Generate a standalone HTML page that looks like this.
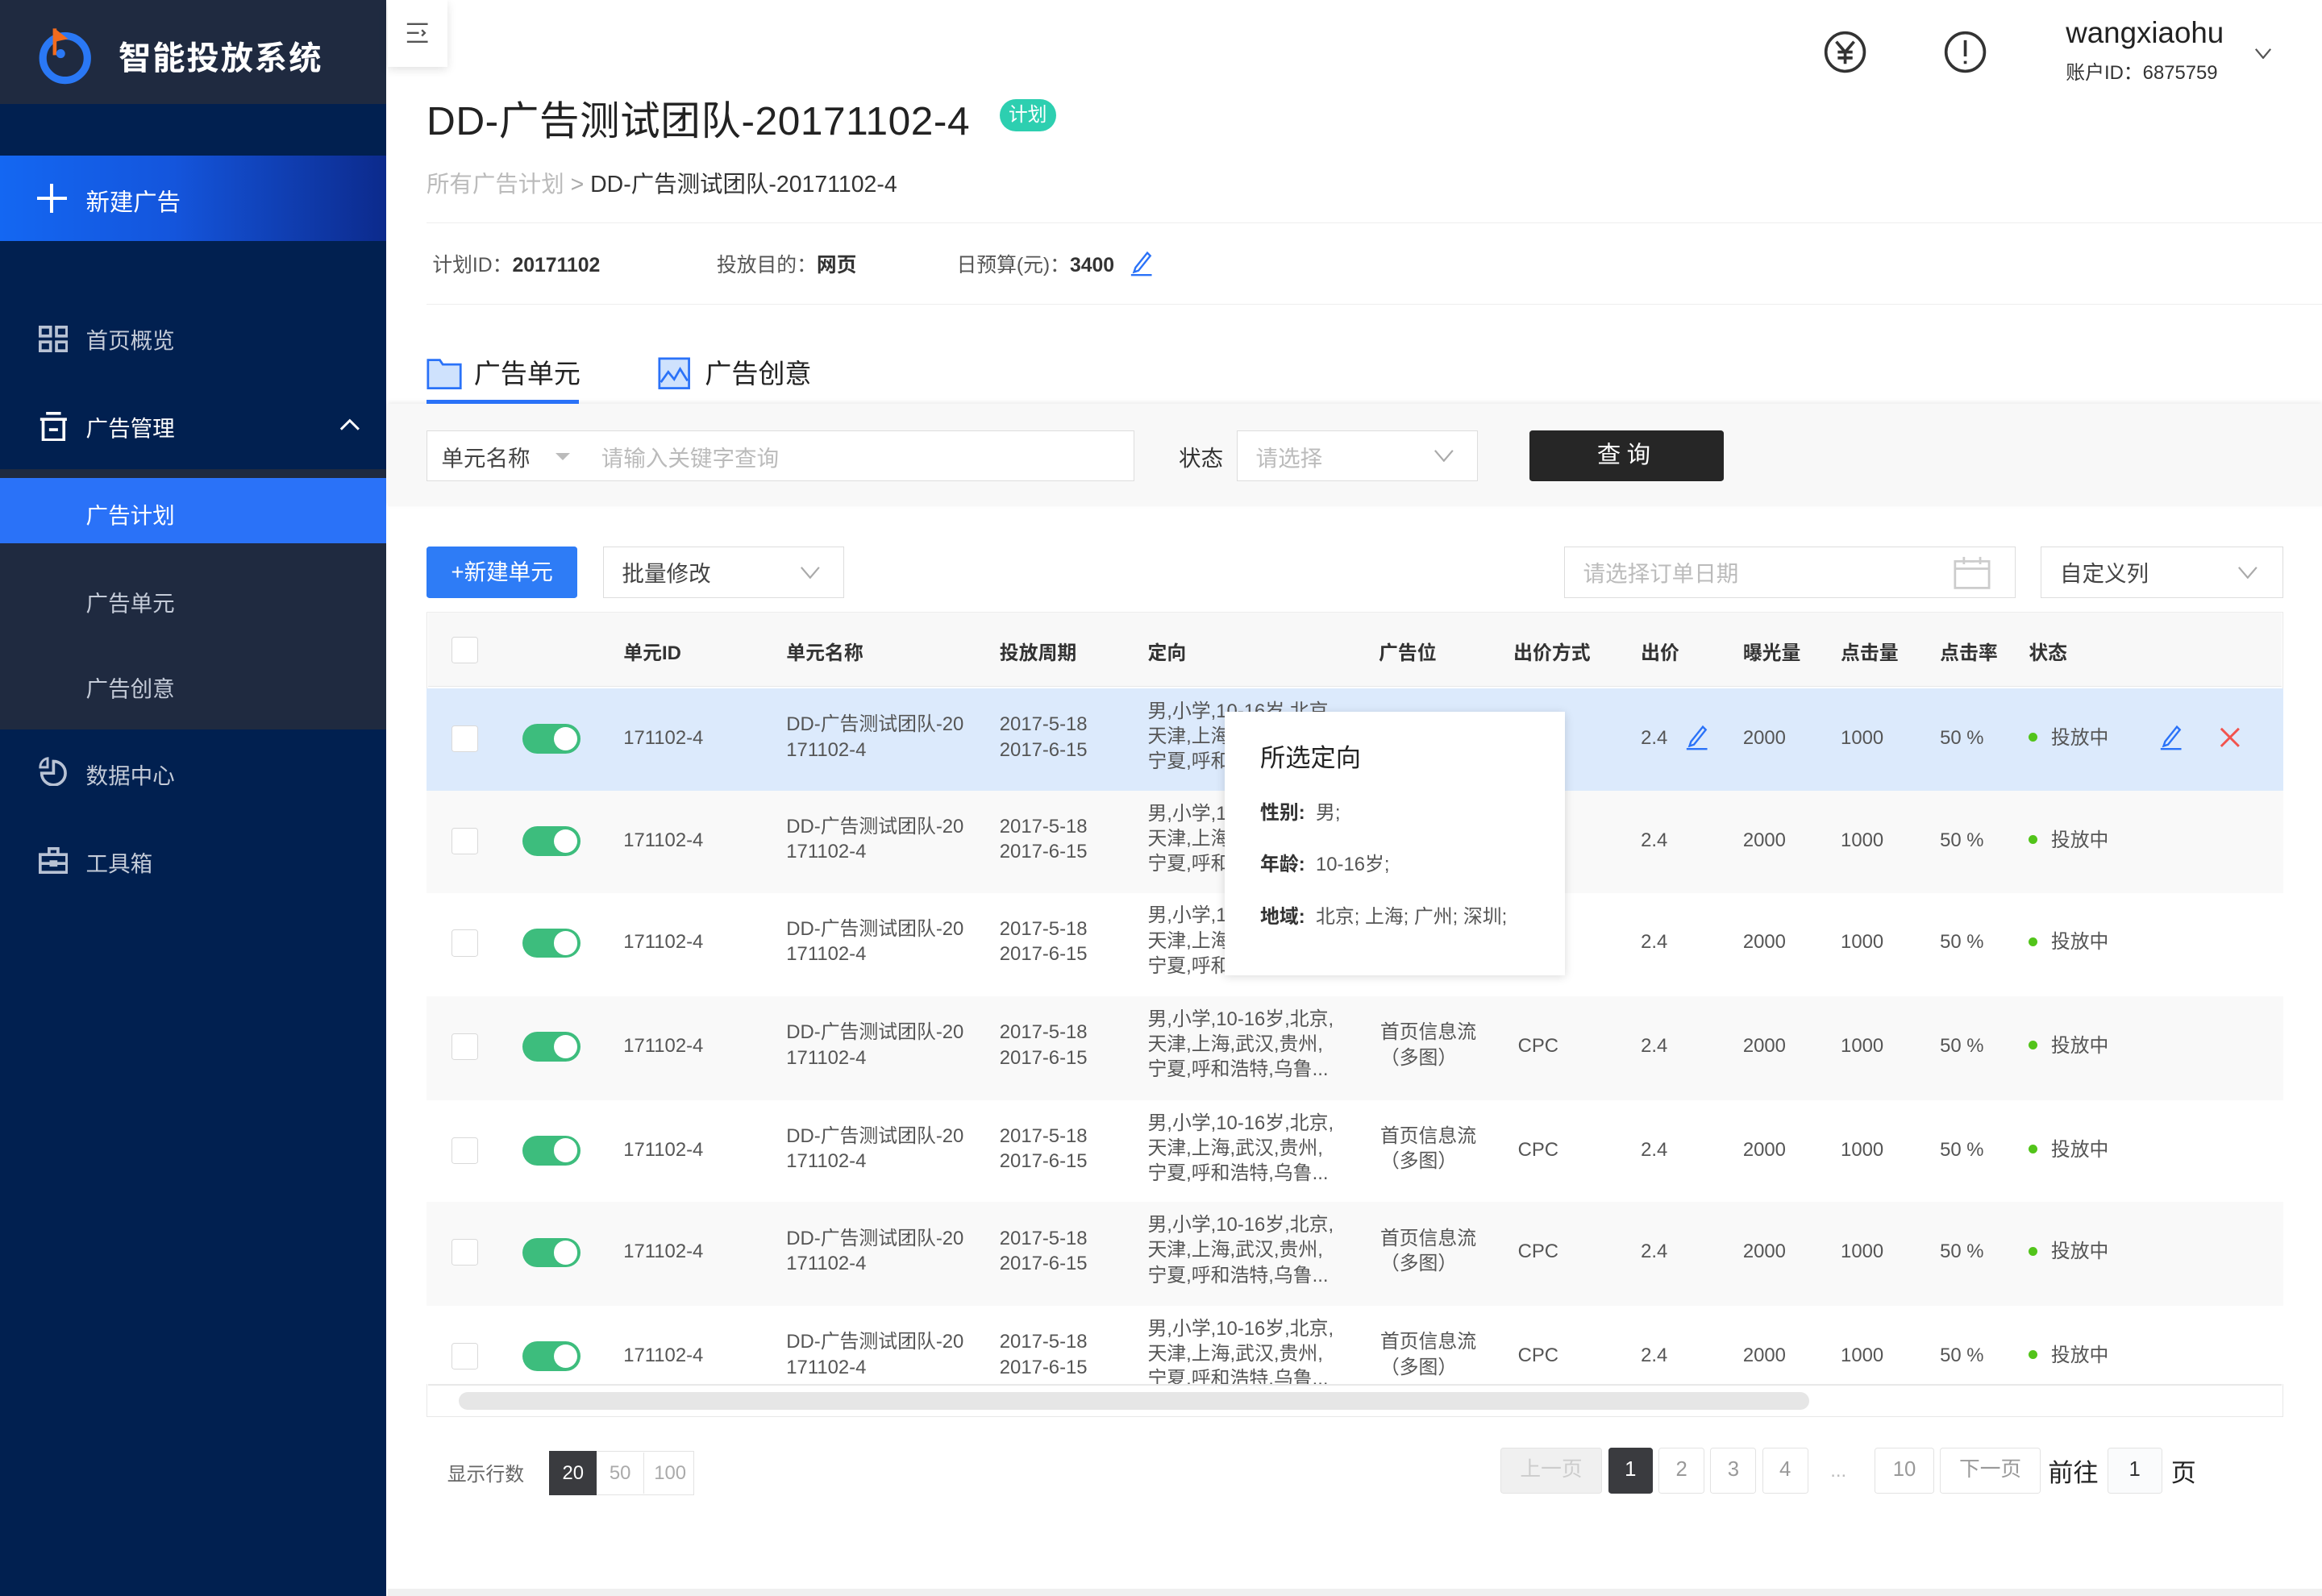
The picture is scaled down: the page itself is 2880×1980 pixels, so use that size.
<!DOCTYPE html>
<html><head><meta charset="utf-8">
<style>
*{box-sizing:border-box;margin:0;padding:0}
html,body{width:2880px;height:1980px;overflow:hidden;background:#fff}
#w{zoom:1.836735;width:1568px;height:1078px;position:relative;font-family:"Liberation Sans","Noto Sans CJK SC",sans-serif;color:#333;font-size:13px}
.a{position:absolute;white-space:nowrap}
.side{position:absolute;left:0;top:0;width:261px;height:1078px;background:#012050}
.nav{color:#c4cbd8;font-size:15px}
.row{position:absolute;left:288px;width:1254px;height:70px}
.row .a{color:#555;font-size:13px;line-height:17px}
.cb{position:absolute;left:17px;width:18px;height:18px;border:1px solid #d9d9d9;border-radius:2px;background:#fff}
.tg{position:absolute;left:65px;width:39px;height:20px;border-radius:10px;background:#3dbd7d}
.tg:after{content:"";position:absolute;right:2px;top:2px;width:16px;height:16px;border-radius:50%;background:#fff}
.dot{display:inline-block;width:6px;height:6px;border-radius:50%;background:#52c41a;margin-right:9px;vertical-align:middle;position:relative;top:-1px}
.th{position:absolute;top:430px;font-weight:bold;font-size:13px;color:#333}
.pg{position:absolute;top:978px;height:31px;border:1px solid #e3e3e3;border-radius:2px;text-align:center;line-height:29px;font-size:14px;color:#999;background:#fff}
</style></head><body><div id="w">

<div class="side"></div>
<div class="a" style="left:0;top:0;width:261px;height:70px;background:#1f2a40"></div>
<svg class="a" style="left:24px;top:15px" width="40" height="42" viewBox="0 0 40 42"><circle cx="20" cy="24" r="15" fill="none" stroke="#2a78f5" stroke-width="5"/><path d="M13 4 L13 22" stroke="#f26b1d" stroke-width="2.5"/><path d="M13 4 L22 11 L13 13Z" fill="#f26b1d"/><circle cx="17" cy="21" r="3" fill="#2a78f5"/></svg>
<div class="a" style="left:80px;top:21px;font-size:22px;font-weight:bold;color:#fff;letter-spacing:1px">智能投放系统</div>
<div class="a" style="left:0;top:105px;width:261px;height:58px;background:linear-gradient(90deg,#1467f2 0%,#1455dc 45%,#0c2a8c 100%)"></div>
<div class="a" style="left:25px;top:124px;width:20px;height:20px"><div class="a" style="left:9px;top:0;width:2px;height:20px;background:#fff"></div><div class="a" style="left:0;top:9px;width:20px;height:2px;background:#fff"></div></div>
<div class="a" style="left:58px;top:124px;font-size:16px;color:#fff">新建广告</div>

<svg class="a" style="left:26px;top:220px" width="20" height="18" viewBox="0 0 20 18" fill="none" stroke="#b8c2d4" stroke-width="2"><rect x="1" y="1" width="7" height="6"/><rect x="12" y="1" width="7" height="6"/><rect x="1" y="11" width="7" height="6"/><rect x="12" y="11" width="7" height="6"/></svg>
<div class="a nav" style="left:58px;top:218px">首页概览</div>
<svg class="a" style="left:26px;top:278px" width="20" height="20" viewBox="0 0 20 20" fill="none" stroke="#fff" stroke-width="2"><path d="M5 1H15M1 5H19M3 5V19H17V5M7 12H13"/></svg>
<div class="a" style="left:58px;top:277px;font-size:15px;color:#fff">广告管理</div>
<svg class="a" style="left:229px;top:282px" width="14" height="10" viewBox="0 0 14 10" fill="none" stroke="#fff" stroke-width="1.6"><path d="M1 8L7 2L13 8"/></svg>
<div class="a" style="left:0;top:317px;width:261px;height:176px;background:#1f2a40"></div>
<div class="a" style="left:0;top:323px;width:261px;height:44px;background:#2a72f8"></div>
<div class="a" style="left:58px;top:336px;font-size:15px;color:#fff">广告计划</div>
<div class="a nav" style="left:58px;top:395px">广告单元</div>
<div class="a nav" style="left:58px;top:453px">广告创意</div>
<svg class="a" style="left:26px;top:511px" width="20" height="20" viewBox="0 0 20 20" fill="none" stroke="#b8c2d4" stroke-width="2"><path d="M10 3A8 8 0 1 1 2 11H10Z"/><path d="M6 1V7H1A6 6 0 0 1 6 1Z" stroke-width="1.6"/></svg>
<div class="a nav" style="left:58px;top:512px">数据中心</div>
<svg class="a" style="left:26px;top:572px" width="20" height="18" viewBox="0 0 20 18" fill="none" stroke="#b8c2d4" stroke-width="2"><rect x="1" y="5" width="18" height="12"/><path d="M7 5V1H13V5M1 11H19"/><rect x="8" y="9.5" width="4" height="3" stroke-width="1.3"/></svg>
<div class="a nav" style="left:58px;top:571px">工具箱</div>

<div class="a" style="left:262px;top:0;width:40px;height:45px;background:#fff;box-shadow:0 2px 6px rgba(0,0,0,.12)"></div>
<svg class="a" style="left:274px;top:15px" width="16" height="14" viewBox="0 0 16 14" fill="none" stroke="#555" stroke-width="1.3"><path d="M1 1H15M1 7H9M1 13H15M11 5L13 7L11 9"/></svg>
<svg class="a" style="left:1231px;top:20px" width="30" height="30" viewBox="0 0 30 30" fill="none" stroke="#333" stroke-width="2"><circle cx="15" cy="15" r="13"/><path d="M9 8L15 15L21 8M15 15V23M10 15H20M10 19H20"/></svg>
<svg class="a" style="left:1312px;top:20px" width="30" height="30" viewBox="0 0 30 30" fill="none" stroke="#333" stroke-width="2"><circle cx="15" cy="15" r="13"/><path d="M15 7V18M15 21V23"/></svg>
<div class="a" style="left:1395px;top:11px;font-size:20px;color:#222">wangxiaohu</div>
<div class="a" style="left:1395px;top:38px;font-size:13px;color:#333">账户ID：6875759</div>
<svg class="a" style="left:1522px;top:32px" width="12" height="8" viewBox="0 0 12 8" fill="none" stroke="#555" stroke-width="1.2"><path d="M1 1L6 7L11 1"/></svg>

<div class="a" style="left:288px;top:60px;font-size:27px;color:#222;letter-spacing:0.3px">DD-广告测试团队-20171102-4</div>
<div class="a" style="left:675px;top:67px;width:38px;height:22px;border-radius:11px;background:#2dcfb0;color:#fff;font-size:13px;text-align:center;line-height:22px">计划</div>
<div class="a" style="left:288px;top:112px;font-size:15.5px;color:#bbb">所有广告计划 <span style="color:#aaa">&gt;</span> <span style="color:#333">DD-广告测试团队-20171102-4</span></div>
<div class="a" style="left:288px;top:150px;width:1280px;height:1px;background:#eee"></div>
<div class="a" style="left:292px;top:168px;font-size:13.5px;color:#555">计划ID：<b style="color:#333">20171102</b></div>
<div class="a" style="left:484px;top:168px;font-size:13.5px;color:#555">投放目的：<b style="color:#333">网页</b></div>
<div class="a" style="left:646px;top:168px;font-size:13.5px;color:#555">日预算(元)：<b style="color:#333">3400</b></div>
<svg class="a" style="left:763px;top:169px" width="16" height="18" viewBox="0 0 16 18" fill="none" stroke="#2a72f8" stroke-width="1.3"><path d="M4 12L12 2L14 4L6 14L3 15Z"/><path d="M1 17H15"/></svg>
<div class="a" style="left:288px;top:205px;width:1280px;height:1px;background:#eee"></div>

<svg class="a" style="left:288px;top:241px" width="24" height="22" viewBox="0 0 24 22"><path d="M1 2H9L11 5H23V21H1Z" fill="#cfe2fd" stroke="#2a72f8" stroke-width="1.5"/></svg>
<div class="a" style="left:320px;top:238px;font-size:18px;color:#222">广告单元</div>
<svg class="a" style="left:444px;top:241px" width="22" height="22" viewBox="0 0 22 22" fill="none" stroke="#2a72f8" stroke-width="1.5"><rect x="1" y="1" width="20" height="20" fill="#cfe2fd"/><path d="M2 17L7 10L11 15L15 8L20 16"/></svg>
<div class="a" style="left:476px;top:238px;font-size:18px;color:#222">广告创意</div>
<div class="a" style="left:262px;top:273px;width:1306px;height:69px;background:#f8f8f8;box-shadow:0 -1px 3px rgba(0,0,0,.08)"></div>
<div class="a" style="left:288px;top:270px;width:103px;height:3px;background:#2a72f8"></div>

<div class="a" style="left:288px;top:291px;width:478px;height:34px;border:1px solid #ddd;background:#fff"></div>
<div class="a" style="left:298px;top:297px;font-size:15px;color:#444">单元名称</div>
<div class="a" style="left:375px;top:306px;border:5px solid transparent;border-top:5px solid #bbb"></div>
<div class="a" style="left:406px;top:297px;font-size:15px;color:#bbb">请输入关键字查询</div>
<div class="a" style="left:796px;top:297px;font-size:15px;color:#333">状态</div>
<div class="a" style="left:835px;top:291px;width:163px;height:34px;border:1px solid #ddd;background:#fff"></div>
<div class="a" style="left:848px;top:297px;font-size:15px;color:#bbb">请选择</div>
<svg class="a" style="left:968px;top:303px" width="14" height="9" viewBox="0 0 14 9" fill="none" stroke="#aaa" stroke-width="1.2"><path d="M1 1L7 8L13 1"/></svg>
<div class="a" style="left:1033px;top:291px;width:131px;height:34px;background:#262626;border-radius:2px;color:#fff;font-size:16px;text-align:center;line-height:34px;letter-spacing:4px">查询</div>

<div class="a" style="left:288px;top:369px;width:102px;height:35px;background:#2e7cf6;border-radius:2px;color:#fff;font-size:15px;text-align:center;line-height:35px">+新建单元</div>
<div class="a" style="left:407px;top:369px;width:163px;height:35px;border:1px solid #ddd"></div>
<div class="a" style="left:420px;top:375px;font-size:15px;color:#444">批量修改</div>
<svg class="a" style="left:540px;top:382px" width="14" height="9" viewBox="0 0 14 9" fill="none" stroke="#aaa" stroke-width="1.2"><path d="M1 1L7 8L13 1"/></svg>
<div class="a" style="left:1056px;top:369px;width:305px;height:35px;border:1px solid #ddd"></div>
<div class="a" style="left:1069px;top:375px;font-size:15px;color:#bbb">请选择订单日期</div>
<svg class="a" style="left:1319px;top:375px" width="25" height="23" viewBox="0 0 25 23" fill="none" stroke="#ccc" stroke-width="1.5"><rect x="1" y="4" width="23" height="18"/><path d="M1 9H24M7 1V6M18 1V6M11 4H14"/></svg>
<div class="a" style="left:1378px;top:369px;width:164px;height:35px;border:1px solid #ddd"></div>
<div class="a" style="left:1391px;top:375px;font-size:15px;color:#444">自定义列</div>
<svg class="a" style="left:1511px;top:382px" width="14" height="9" viewBox="0 0 14 9" fill="none" stroke="#aaa" stroke-width="1.2"><path d="M1 1L7 8L13 1"/></svg>

<div class="a" style="left:288px;top:413px;width:1254px;height:544px;border:1px solid #e8e8e8;border-top:1px solid #eee"></div>
<div class="a" style="left:289px;top:414px;width:1252px;height:50px;background:#f8f8f8;border-bottom:1px solid #e8e8e8"></div>
<div class="cb" style="left:305px;top:430px"></div>
<div class="th" style="left:421px">单元ID</div>
<div class="th" style="left:531px">单元名称</div>
<div class="th" style="left:675px">投放周期</div>
<div class="th" style="left:775px">定向</div>
<div class="th" style="left:931px">广告位</div>
<div class="th" style="left:1022px">出价方式</div>
<div class="th" style="left:1108px">出价</div>
<div class="th" style="left:1177px">曝光量</div>
<div class="th" style="left:1243px">点击量</div>
<div class="th" style="left:1310px">点击率</div>
<div class="th" style="left:1370px">状态</div>

<div style="position:absolute;left:0;top:0;width:1568px;height:935px;overflow:hidden">
<div class="row" style="top:465px;background:#dceafc">
<div class="cb" style="top:25px"></div><div class="tg" style="top:24px"></div>
<div class="a" style="left:133px;top:25px">171102-4</div>
<div class="a" style="left:243px;top:16px">DD-广告测试团队-20<br>171102-4</div>
<div class="a" style="left:387px;top:16px">2017-5-18<br>2017-6-15</div>
<div class="a" style="left:487px;top:7px">男,小学,10-16岁,北京,<br>天津,上海,武汉,贵州,<br>宁夏,呼和浩特,乌鲁...</div>
<div class="a" style="left:820px;top:25px">2.4</div>
<svg class="a" style="left:850px;top:24px" width="16" height="18" viewBox="0 0 16 18" fill="none" stroke="#2a72f8" stroke-width="1.3"><path d="M4 12L12 2L14 4L6 14L3 15Z"/><path d="M1 17H15"/></svg>
<div class="a" style="left:889px;top:25px">2000</div><div class="a" style="left:955px;top:25px">1000</div><div class="a" style="left:1022px;top:25px">50 %</div>
<div class="a" style="left:1082px;top:25px"><span class="dot"></span>投放中</div>
<svg class="a" style="left:1170px;top:24px" width="16" height="18" viewBox="0 0 16 18" fill="none" stroke="#2a72f8" stroke-width="1.3"><path d="M4 12L12 2L14 4L6 14L3 15Z"/><path d="M1 17H15"/></svg>
<svg class="a" style="left:1211px;top:26px" width="14" height="14" viewBox="0 0 14 14" stroke="#f2534e" stroke-width="1.6"><path d="M1 1L13 13M13 1L1 13"/></svg>
</div>

<div class="row" style="top:534px;background:#f9f9f9">
<div class="cb" style="top:25px"></div><div class="tg" style="top:24px"></div>
<div class="a" style="left:133px;top:25px">171102-4</div>
<div class="a" style="left:243px;top:16px">DD-广告测试团队-20<br>171102-4</div>
<div class="a" style="left:387px;top:16px">2017-5-18<br>2017-6-15</div>
<div class="a" style="left:487px;top:7px">男,小学,10-16岁,北京,<br>天津,上海,武汉,贵州,<br>宁夏,呼和浩特,乌鲁...</div>
<div class="a" style="left:644px;top:16px">首页信息流<br>（多图）</div><div class="a" style="left:737px;top:25px">CPC</div>
<div class="a" style="left:820px;top:25px">2.4</div>
<div class="a" style="left:889px;top:25px">2000</div><div class="a" style="left:955px;top:25px">1000</div><div class="a" style="left:1022px;top:25px">50 %</div>
<div class="a" style="left:1082px;top:25px"><span class="dot"></span>投放中</div>
</div>

<div class="row" style="top:603px;background:#fff">
<div class="cb" style="top:25px"></div><div class="tg" style="top:24px"></div>
<div class="a" style="left:133px;top:25px">171102-4</div>
<div class="a" style="left:243px;top:16px">DD-广告测试团队-20<br>171102-4</div>
<div class="a" style="left:387px;top:16px">2017-5-18<br>2017-6-15</div>
<div class="a" style="left:487px;top:7px">男,小学,10-16岁,北京,<br>天津,上海,武汉,贵州,<br>宁夏,呼和浩特,乌鲁...</div>
<div class="a" style="left:644px;top:16px">首页信息流<br>（多图）</div><div class="a" style="left:737px;top:25px">CPC</div>
<div class="a" style="left:820px;top:25px">2.4</div>
<div class="a" style="left:889px;top:25px">2000</div><div class="a" style="left:955px;top:25px">1000</div><div class="a" style="left:1022px;top:25px">50 %</div>
<div class="a" style="left:1082px;top:25px"><span class="dot"></span>投放中</div>
</div>

<div class="row" style="top:673px;background:#f9f9f9">
<div class="cb" style="top:25px"></div><div class="tg" style="top:24px"></div>
<div class="a" style="left:133px;top:25px">171102-4</div>
<div class="a" style="left:243px;top:16px">DD-广告测试团队-20<br>171102-4</div>
<div class="a" style="left:387px;top:16px">2017-5-18<br>2017-6-15</div>
<div class="a" style="left:487px;top:7px">男,小学,10-16岁,北京,<br>天津,上海,武汉,贵州,<br>宁夏,呼和浩特,乌鲁...</div>
<div class="a" style="left:644px;top:16px">首页信息流<br>（多图）</div><div class="a" style="left:737px;top:25px">CPC</div>
<div class="a" style="left:820px;top:25px">2.4</div>
<div class="a" style="left:889px;top:25px">2000</div><div class="a" style="left:955px;top:25px">1000</div><div class="a" style="left:1022px;top:25px">50 %</div>
<div class="a" style="left:1082px;top:25px"><span class="dot"></span>投放中</div>
</div>

<div class="row" style="top:743px;background:#fff">
<div class="cb" style="top:25px"></div><div class="tg" style="top:24px"></div>
<div class="a" style="left:133px;top:25px">171102-4</div>
<div class="a" style="left:243px;top:16px">DD-广告测试团队-20<br>171102-4</div>
<div class="a" style="left:387px;top:16px">2017-5-18<br>2017-6-15</div>
<div class="a" style="left:487px;top:7px">男,小学,10-16岁,北京,<br>天津,上海,武汉,贵州,<br>宁夏,呼和浩特,乌鲁...</div>
<div class="a" style="left:644px;top:16px">首页信息流<br>（多图）</div><div class="a" style="left:737px;top:25px">CPC</div>
<div class="a" style="left:820px;top:25px">2.4</div>
<div class="a" style="left:889px;top:25px">2000</div><div class="a" style="left:955px;top:25px">1000</div><div class="a" style="left:1022px;top:25px">50 %</div>
<div class="a" style="left:1082px;top:25px"><span class="dot"></span>投放中</div>
</div>

<div class="row" style="top:812px;background:#f9f9f9">
<div class="cb" style="top:25px"></div><div class="tg" style="top:24px"></div>
<div class="a" style="left:133px;top:25px">171102-4</div>
<div class="a" style="left:243px;top:16px">DD-广告测试团队-20<br>171102-4</div>
<div class="a" style="left:387px;top:16px">2017-5-18<br>2017-6-15</div>
<div class="a" style="left:487px;top:7px">男,小学,10-16岁,北京,<br>天津,上海,武汉,贵州,<br>宁夏,呼和浩特,乌鲁...</div>
<div class="a" style="left:644px;top:16px">首页信息流<br>（多图）</div><div class="a" style="left:737px;top:25px">CPC</div>
<div class="a" style="left:820px;top:25px">2.4</div>
<div class="a" style="left:889px;top:25px">2000</div><div class="a" style="left:955px;top:25px">1000</div><div class="a" style="left:1022px;top:25px">50 %</div>
<div class="a" style="left:1082px;top:25px"><span class="dot"></span>投放中</div>
</div>

<div class="row" style="top:882px;background:#fff">
<div class="cb" style="top:25px"></div><div class="tg" style="top:24px"></div>
<div class="a" style="left:133px;top:25px">171102-4</div>
<div class="a" style="left:243px;top:16px">DD-广告测试团队-20<br>171102-4</div>
<div class="a" style="left:387px;top:16px">2017-5-18<br>2017-6-15</div>
<div class="a" style="left:487px;top:7px">男,小学,10-16岁,北京,<br>天津,上海,武汉,贵州,<br>宁夏,呼和浩特,乌鲁...</div>
<div class="a" style="left:644px;top:16px">首页信息流<br>（多图）</div><div class="a" style="left:737px;top:25px">CPC</div>
<div class="a" style="left:820px;top:25px">2.4</div>
<div class="a" style="left:889px;top:25px">2000</div><div class="a" style="left:955px;top:25px">1000</div><div class="a" style="left:1022px;top:25px">50 %</div>
<div class="a" style="left:1082px;top:25px"><span class="dot"></span>投放中</div>
</div>
</div>
<div class="a" style="left:289px;top:935px;width:1252px;height:1px;background:#e8e8e8"></div>
<div class="a" style="left:310px;top:940px;width:912px;height:12px;border-radius:6px;background:#e6e6e6"></div>

<div class="a" style="left:827px;top:481px;width:230px;height:178px;background:#fff;box-shadow:0 1px 6px rgba(0,0,0,.15)"></div>
<div class="a" style="left:851px;top:498px;font-size:17px;color:#222">所选定向</div>
<div class="a" style="left:851px;top:538px;font-size:13px;color:#555"><b style="color:#333">性别:</b>&nbsp;&nbsp;男;</div>
<div class="a" style="left:851px;top:573px;font-size:13px;color:#555"><b style="color:#333">年龄:</b>&nbsp;&nbsp;10-16岁;</div>
<div class="a" style="left:851px;top:608px;font-size:13px;color:#555"><b style="color:#333">地域:</b>&nbsp;&nbsp;北京; 上海; 广州; 深圳;</div>

<div class="a" style="left:302px;top:985px;font-size:13px;color:#666">显示行数</div>
<div class="a" style="left:371px;top:980px;width:98px;height:30px;border:1px solid #e3e3e3"></div>
<div class="a" style="left:371px;top:980px;width:32px;height:30px;background:#3a3b3f;color:#fff;font-size:13px;text-align:center;line-height:30px">20</div>
<div class="a" style="left:403px;top:981px;width:32px;height:28px;color:#aaa;font-size:13px;text-align:center;line-height:28px;border-right:1px solid #e3e3e3">50</div>
<div class="a" style="left:436px;top:981px;width:33px;height:28px;color:#aaa;font-size:13px;text-align:center;line-height:28px">100</div>
<div class="pg" style="left:1013px;width:69px;background:#f0f0f0;color:#ccc">上一页</div>
<div class="pg" style="left:1086px;width:30px;background:#3a3b3f;color:#fff;border-color:#3a3b3f">1</div>
<div class="pg" style="left:1120px;width:31px">2</div>
<div class="pg" style="left:1155px;width:31px">3</div>
<div class="pg" style="left:1190px;width:31px">4</div>
<div class="a" style="left:1236px;top:986px;color:#bbb;font-size:13px">...</div>
<div class="pg" style="left:1266px;width:40px">10</div>
<div class="pg" style="left:1310px;width:68px">下一页</div>
<div class="a" style="left:1383px;top:981px;font-size:17px;color:#222">前往</div>
<div class="pg" style="left:1423px;width:37px;color:#333;background:#fafbfc">1</div>
<div class="a" style="left:1466px;top:981px;font-size:17px;color:#222">页</div>
<div class="a" style="left:262px;top:1073px;width:1306px;height:5px;background:#f0f0f0"></div>
</div></body></html>
